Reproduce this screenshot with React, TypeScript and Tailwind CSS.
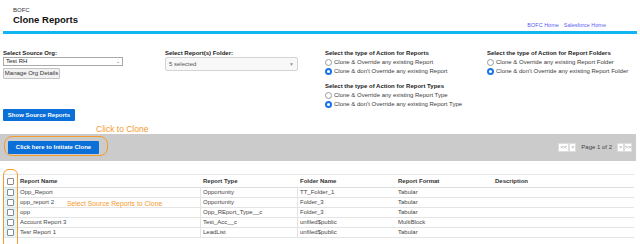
import React from 'react';

const rows = [
  { name: 'Opp_Report', type: 'Opportunity', folder: 'TT_Folder_1', format: 'Tabular' },
  { name: 'opp_report 2', type: 'Opportunity', folder: 'Folder_3', format: 'Tabular' },
  { name: 'opp', type: 'Opp_REport_Type__c', folder: 'Folder_3', format: 'Tabular' },
  { name: 'Account Report 3', type: 'Test_Acc__c', folder: 'unfiled$public', format: 'MultiBlock' },
  { name: 'Tesr Report 1', type: 'LeadList', folder: 'unfiled$public', format: 'Tabular' },
];

const Radio: React.FC<{ checked?: boolean; label: string }> = ({ checked, label }) => (
  <div className="flex items-center gap-[2px] h-[9px]">
    {checked ? (
      <span className="w-[7px] h-[7px] rounded-full bg-[#1a73e8] flex items-center justify-center">
        <span className="w-[3px] h-[3px] rounded-full bg-white" />
      </span>
    ) : (
      <span className="w-[7px] h-[7px] rounded-full border border-[#9a9a9a] bg-white" />
    )}
    <span className="text-[#3a3a3a]">{label}</span>
  </div>
);

const Box: React.FC = () => (
  <span className="block w-[7px] h-[7px] border border-[#8a8a8a] bg-white rounded-[1px]" />
);

export default function App() {
  return (
    <div
      className="w-[640px] h-[244px] overflow-hidden bg-white text-[6px] leading-[9px] text-[#222]"
      style={{ fontFamily: '"Liberation Sans", Arial, sans-serif' }}
    >
      {/* header */}
      <div className="flex items-start justify-between pl-[13px] pt-[7px] h-[31px]">
        <div className="flex flex-col">
          <span className="text-[6px] leading-[7px] text-[#333]">BOFC</span>
          <span className="text-[9.5px] leading-[12px] font-semibold text-[#111]">Clone Reports</span>
        </div>
        <div className="flex gap-[5px] mt-[14px] pr-[34px] text-[5.5px] text-[#5b5bf0]">
          <span>BOFC Home</span>
          <span>Salesforce Home</span>
        </div>
      </div>
      <div className="ml-[3px] mr-[3px] h-[3px] bg-[#12b6ef]" />

      {/* form */}
      <div className="flex pt-[15px] h-[91px]">
        <div className="ml-[3px] w-[120px] flex flex-col">
          <span className="font-bold h-[8px] leading-[8px]">Select Source Org:</span>
          <div className="h-[9px] border border-[#a9a9a9] flex items-center justify-between px-[2px]">
            <span>Test RH</span>
            <span className="text-[#666] text-[5px]">&#8964;</span>
          </div>
          <div className="mt-[2px] w-[57px] h-[11px] border border-[#c4c4c4] bg-[#f1f1f1] rounded-[1px] flex items-center justify-center text-[#333]">
            Manage Org Details
          </div>
          <div className="mt-[30px] w-[72px] h-[12px] bg-[#0b6fd8] rounded-[1px] flex items-center justify-center text-white font-bold">
            Show Source Reports
          </div>
        </div>
        <div className="ml-[42px] w-[133px] flex flex-col">
          <span className="font-bold h-[8px] leading-[8px]">Select Report(s) Folder:</span>
          <div className="h-[14px] border border-[#d4d4d4] rounded-[2px] bg-[#f8f8f8] flex items-center justify-between px-[3px] text-[#555]">
            <span>5 selected</span>
            <span className="text-[#999] text-[5px]">&#9660;</span>
          </div>
        </div>
        <div className="ml-[27px] w-[162px] flex flex-col">
          <span className="font-bold h-[9px] leading-[9px]">Select the type of Action for Reports</span>
          <Radio label="Clone & Override any existing Report" />
          <Radio checked label="Clone & don't Override any existing Report" />
          <span className="font-bold h-[9px] leading-[9px] mt-[6px]">Select the type of Action for Report Types</span>
          <Radio label="Clone & Override any existing Report Type" />
          <Radio checked label="Clone & don't Override any existing Report Type" />
        </div>
        <div className="flex flex-col">
          <span className="font-bold h-[9px] leading-[9px]">Select the type of Action for Report Folders</span>
          <Radio label="Clone & Override any existing Report Folder" />
          <Radio checked label="Clone & don't Override any existing Report Folder" />
        </div>
      </div>

      {/* annotation */}
      <div className="pl-[96px] h-[9px] leading-[9px] text-[#f59a2c] text-[8.5px] font-medium">Click to Clone</div>

      {/* action bar */}
      <div className="relative w-[636px] h-[27px] bg-[#cbcbcb] flex items-center justify-between pl-[8px] pr-[4px]">
        <div className="w-[91px] h-[13px] bg-[#0b6fd8] rounded-[1px] flex items-center justify-center text-white font-bold">
          Click here to Initiate Clone
        </div>
        <div className="absolute left-[4px] top-[2px] w-[104px] h-[20px] rounded-[8px] border border-[#f59a2c]" />
        <div className="flex items-center text-[5.5px] text-[#444]">
          <span className="w-[11px] h-[9px] bg-white border border-[#ddd] flex items-center justify-center text-[#888]">&lt;&lt;</span>
          <span className="w-[7px] h-[9px] bg-white border border-[#ddd] flex items-center justify-center text-[#888]">&lt;</span>
          <span className="ml-[5px] mr-[5px] text-[6px]">Page 1 of 2</span>
          <span className="w-[7px] h-[9px] bg-white border border-[#ddd] flex items-center justify-center text-[#888]">&gt;</span>
          <span className="w-[8px] h-[9px] bg-white border border-[#ddd] flex items-center justify-center text-[#888]">&gt;&gt;</span>
        </div>
      </div>

      {/* table */}
      <div className="relative mt-[13px] ml-[3px] w-[631px] text-[#444]">
        <div className="flex h-[14px] items-center border-t border-[#e6e6e6] border-b border-b-[#dedede] font-semibold text-[#333]">
          <div className="w-[15px] h-full flex items-center justify-center"><Box /></div>
          <div className="w-[183px] pl-[2px]">Report Name</div>
          <div className="w-[97px] pl-[2px]">Report Type</div>
          <div className="w-[98px] pl-[2px]">Folder Name</div>
          <div className="w-[97px] pl-[2px]">Report Format</div>
          <div className="flex-1 pl-[2px]">Description</div>
        </div>
        {rows.map((r) => (
          <div key={r.name} className="flex h-[10px] items-center border-b border-[#e4e4e4]">
            <div className="w-[15px] h-full bg-[#e3f6fb] flex items-center justify-center"><Box /></div>
            <div className="w-[183px] pl-[2px] border-r border-[#e4e4e4] h-full flex items-center">{r.name}</div>
            <div className="w-[97px] pl-[2px] border-r border-[#e4e4e4] h-full flex items-center">{r.type}</div>
            <div className="w-[98px] pl-[2px] h-full flex items-center">{r.folder}</div>
            <div className="w-[97px] pl-[2px] h-full flex items-center">{r.format}</div>
            <div className="flex-1" />
          </div>
        ))}
        <div className="absolute left-[64px] top-[25px] text-[#f59a2c] text-[6.8px]">Select Source Reports to Clone</div>
        <div className="absolute left-[0px] -top-[5px] w-[15px] h-[80px] rounded-[6px] border border-[#f59a2c]" />
      </div>
    </div>
  );
}
